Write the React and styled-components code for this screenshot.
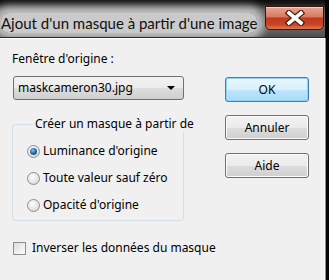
import React from 'react';
import styled, { createGlobalStyle } from 'styled-components';

const Global = createGlobalStyle`
  html, body { margin: 0; padding: 0; background: #050505; }
  body { font-family: "Noto Sans", "Open Sans", sans-serif; }
`;

const Window = styled.div`
  width: 329px;
  height: 280px;
  padding-right: 4px;
  box-sizing: border-box;
  background: #050505;
  display: flex;
  flex-direction: column;
  overflow: hidden;
`;

const TitleBar = styled.div`
  height: 38px;
  flex: none;
  display: flex;
  align-items: flex-start;
  justify-content: space-between;
  background: linear-gradient(to bottom, #0c0c0c 0px, #1c1c1c 4px, #555 10px, #6c6c6c 26px, #4a4a4a 38px);
`;

const Title = styled.span`
  margin: 13px 0 0 1px;
  font-family: Lato, "Noto Sans", sans-serif;
  font-size: 15px;
  line-height: 20px;
  color: #111;
  background: rgba(214, 214, 214, 0.9);
  box-shadow: 0 0 9px 7px rgba(210, 210, 210, 0.85);
  border-radius: 8px;
  white-space: nowrap;
`;

const Close = styled.div`
  width: 57px;
  height: 22px;
  margin: 6px 1px 0 0;
  border: 1px solid #3c120a;
  border-radius: 0 0 5px 5px;
  background: linear-gradient(to bottom, #e7a796 0%, #d77a62 45%, #c2391b 50%, #c8452a 80%, #e07a50 100%);
  box-shadow: inset 0 1px 0 rgba(255, 255, 255, 0.5);
  display: flex;
  align-items: center;
  justify-content: center;
`;

const Body = styled.div`
  flex: 1;
  background: #f0f0f0;
  border-top: 1px solid #fdfdfd;
  border-right: 1px solid #fafafa;
  box-shadow: 1px 0 0 #8c8c8c, 0 -1px 0 #2a2a2a;
  display: flex;
  font-size: 12px;
  color: #000;
`;

const LeftCol = styled.div`
  width: 200px;
  padding: 12px 0 0 12px;
  display: flex;
  flex-direction: column;
`;

const Label = styled.div`
  line-height: 16px;
  height: 16px;
`;

const Select = styled.div`
  margin: 9px 0 0 1px;
  width: 171px;
  height: 24px;
  box-sizing: border-box;
  border: 1px solid #707070;
  border-radius: 3px;
  background: linear-gradient(to bottom, #f2f2f2 0%, #ebebeb 50%, #dddddd 51%, #cfcfcf 100%);
  display: flex;
  align-items: center;
  justify-content: space-between;
  padding: 0 8px 0 4px;
  line-height: 16px;
`;

const Arrow = styled.span`
  width: 0;
  height: 0;
  border-left: 4px solid transparent;
  border-right: 4px solid transparent;
  border-top: 4px solid #000;
`;

const Group = styled.fieldset`
  margin: 16px 0 0 0;
  width: 172px;
  height: 105px;
  box-sizing: border-box;
  border: 1px solid #d5dfe5;
  border-radius: 3px;
  padding: 11px 0 0 14px;
  display: flex;
  flex-direction: column;
  gap: 11px;
  min-inline-size: 0;
`;

const Legend = styled.legend`
  padding: 0 2px;
  margin-left: 6px;
  line-height: 16px;
  white-space: nowrap;
`;

const Option = styled.div`
  display: flex;
  align-items: center;
  gap: 3px;
  height: 16px;
  line-height: 16px;
  white-space: nowrap;
`;

const Radio = styled.span`
  width: 13px;
  height: 13px;
  flex: none;
  box-sizing: border-box;
  border-radius: 50%;
  border: 1px solid #8d8d8d;
  background: radial-gradient(circle at 40% 35%, #fcfcfc 0%, #e6e6e6 55%, #c9c9c9 100%);
  display: flex;
  align-items: center;
  justify-content: center;
  &::after {
    content: '';
    width: 7px;
    height: 7px;
    border-radius: 50%;
    display: ${p => (p.$on ? 'block' : 'none')};
    background: radial-gradient(circle at 40% 35%, #8fc4e8 0%, #2a6ea4 45%, #0f3d66 100%);
  }
`;

const CheckRow = styled.div`
  margin-top: 19px;
  margin-left: 1px;
  display: flex;
  align-items: center;
  gap: 6px;
  line-height: 16px;
  white-space: nowrap;
`;

const Check = styled.span`
  width: 13px;
  height: 13px;
  flex: none;
  box-sizing: border-box;
  border: 1px solid #8e8f8f;
  background: linear-gradient(135deg, #dcdcdc 0%, #f4f4f4 70%, #fafafa 100%);
`;

const RightCol = styled.div`
  padding: 38px 0 0 13px;
  display: flex;
  flex-direction: column;
  gap: 13px;
`;

const Button = styled.div`
  width: 84px;
  height: 25px;
  box-sizing: border-box;
  border-radius: 3px;
  border: 1px solid ${p => (p.$def ? '#3c7fb1' : '#707070')};
  background: ${p =>
    p.$def
      ? 'linear-gradient(to bottom, #eaf6fd 0%, #d9f0fc 50%, #bee6fd 51%, #a7d9f5 100%)'
      : 'linear-gradient(to bottom, #f2f2f2 0%, #ebebeb 50%, #dddddd 51%, #cfcfcf 100%)'};
  box-shadow: inset 0 0 0 1px ${p => (p.$def ? '#8fd3f5' : '#fcfcfc')};
  display: flex;
  align-items: center;
  justify-content: center;
  line-height: 16px;
`;

export default function App() {
  return (
    <Window>
      <Global />
      <TitleBar>
        <Title>Ajout d'un masque à partir d'une image</Title>
        <Close>
          <svg width="22" height="16" viewBox="0 0 22 16">
            <path d="M5 3 L17 13 M17 3 L5 13" stroke="#4a1a10" strokeWidth="6" strokeLinecap="square" />
            <path d="M5 3 L17 13 M17 3 L5 13" stroke="#fff" strokeWidth="3.6" strokeLinecap="square" />
          </svg>
        </Close>
      </TitleBar>
      <Body>
        <LeftCol>
          <Label>Fenêtre d'origine :</Label>
          <Select>
            <span>maskcameron30.jpg</span>
            <Arrow />
          </Select>
          <Group>
            <Legend>Créer un masque à partir de</Legend>
            <Option><Radio $on />Luminance d'origine</Option>
            <Option><Radio />Toute valeur sauf zéro</Option>
            <Option><Radio />Opacité d'origine</Option>
          </Group>
          <CheckRow><Check />Inverser les données du masque</CheckRow>
        </LeftCol>
        <RightCol>
          <Button $def>OK</Button>
          <Button>Annuler</Button>
          <Button>Aide</Button>
        </RightCol>
      </Body>
    </Window>
  );
}
